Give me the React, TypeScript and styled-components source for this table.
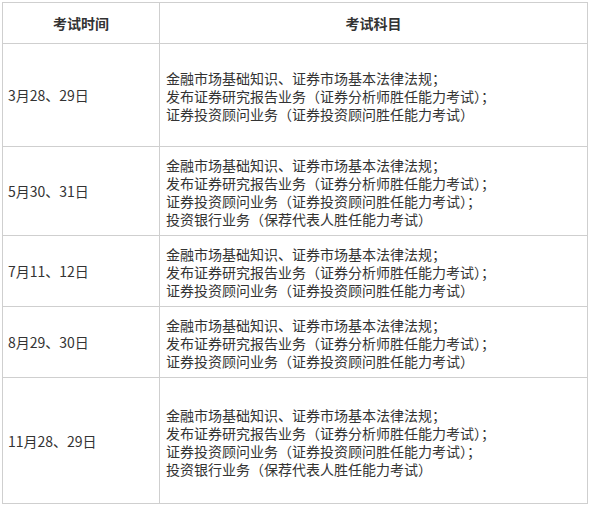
import React from 'react';
import styled, { createGlobalStyle } from 'styled-components';

const BASE = [
  '金融市场基础知识、证券市场基本法律法规；',
  '发布证券研究报告业务（证券分析师胜任能力考试）；',
];

const ADVISOR = '证券投资顾问业务（证券投资顾问胜任能力考试）';
const BANKING = '投资银行业务（保荐代表人胜任能力考试）';

const rows = [
  { date: '3月28、29日', height: 103, subjects: [...BASE, ADVISOR] },
  { date: '5月30、31日', height: 89, subjects: [...BASE, ADVISOR + '；', BANKING] },
  { date: '7月11、12日', height: 71, subjects: [...BASE, ADVISOR] },
  { date: '8月29、30日', height: 71, subjects: [...BASE, ADVISOR] },
  { date: '11月28、29日', height: 126, subjects: [...BASE, ADVISOR + '；', BANKING] },
];

function App() {
  return (
    <>
      <GlobalStyle />
      <Page>
        <Table>
          <colgroup>
            <col style={{ width: 157 }} />
            <col />
          </colgroup>
          <thead>
            <Row $height={41}>
              <HeadCell>考试时间</HeadCell>
              <HeadCell>考试科目</HeadCell>
            </Row>
          </thead>
          <tbody>
            {rows.map((row) => (
              <Row key={row.date} $height={row.height}>
                <DateCell>{row.date}</DateCell>
                <SubjectCell>
                  {row.subjects.map((line, i) => (
                    <Line key={i}>{line}</Line>
                  ))}
                </SubjectCell>
              </Row>
            ))}
          </tbody>
        </Table>
      </Page>
    </>
  );
}

export default App;

const GlobalStyle = createGlobalStyle`
  html, body {
    margin: 0;
    background: #fff;
  }
  body {
    font-family: "Noto Sans CJK SC", "Noto Sans", sans-serif;
    color: #333;
  }
`;

const Page = styled.div`
  width: 594px;
  height: 506px;
  padding: 2px 0 0 2px;
  box-sizing: border-box;
  background: #fff;
`;

const Table = styled.table`
  width: 586px;
  table-layout: fixed;
  border-collapse: collapse;
  font-size: 14px;
  line-height: 18px;
`;

const Row = styled.tr<{ $height: number }>`
  height: ${(p) => p.$height}px;
`;

const HeadCell = styled.th`
  border: 1px solid #cfcfcf;
  padding: 0 5px;
  font-weight: 700;
  text-align: center;
  vertical-align: middle;
  color: #333;
`;

const DateCell = styled.td`
  border: 1px solid #cfcfcf;
  padding: 0 5px;
  vertical-align: middle;
  color: #333;
`;

const SubjectCell = styled.td`
  border: 1px solid #cfcfcf;
  padding: 2px 6px 0;
  vertical-align: middle;
  color: #333;
`;

const Line = styled.div`
  white-space: nowrap;
`;
